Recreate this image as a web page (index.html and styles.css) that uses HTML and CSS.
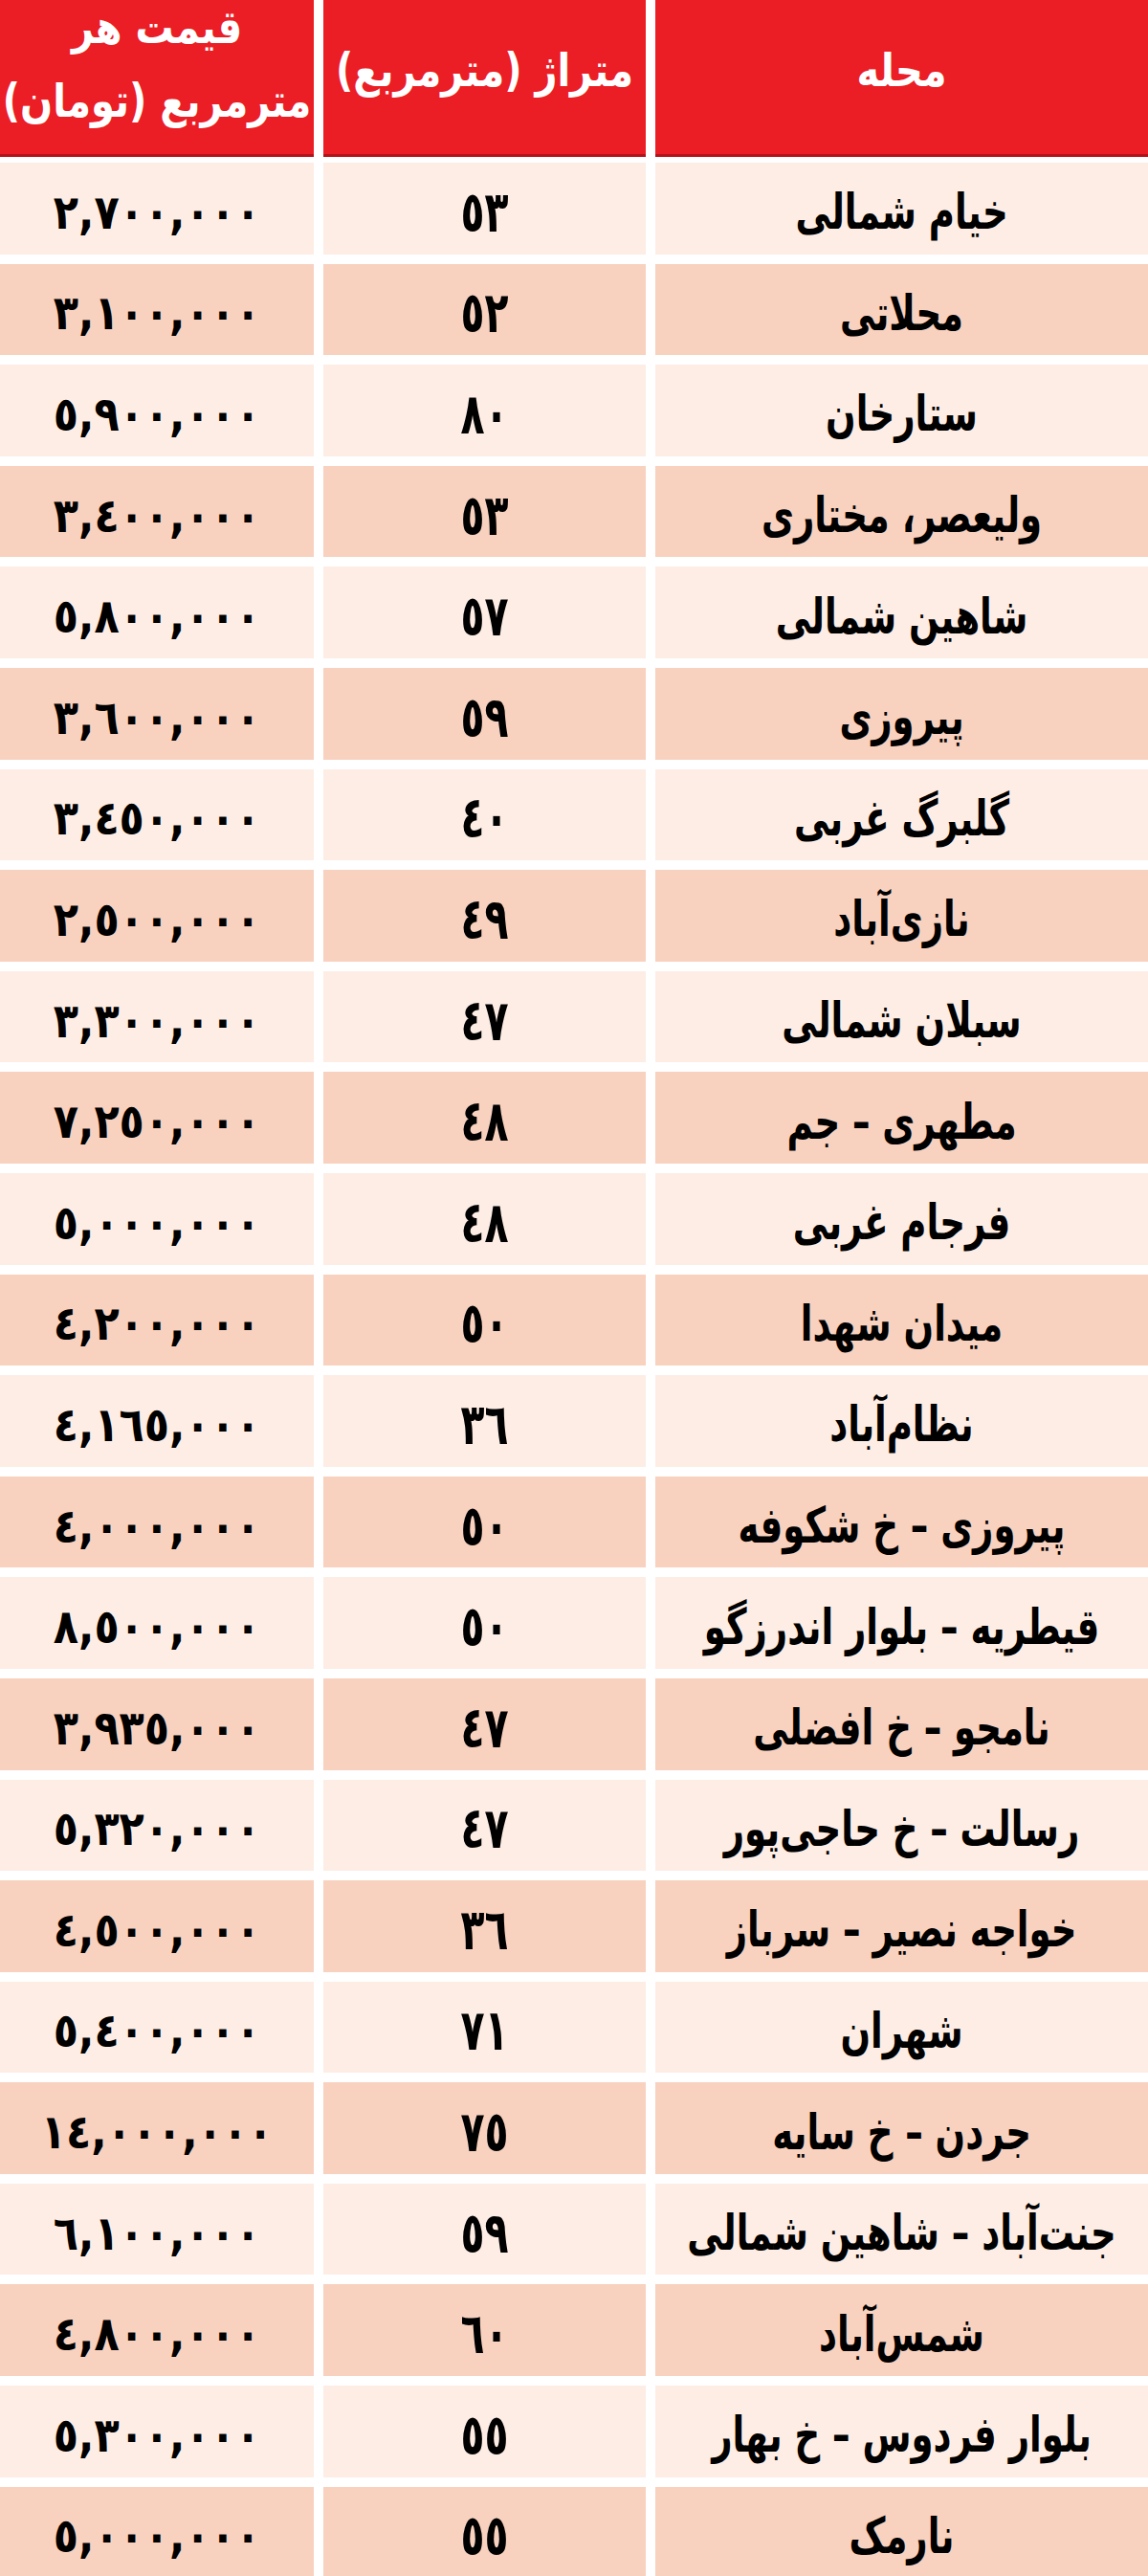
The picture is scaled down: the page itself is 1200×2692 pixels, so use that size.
FILE: index.html
```html
<!DOCTYPE html>
<html lang="fa" dir="rtl">
<head>
<meta charset="utf-8">
<title>قیمت مسکن</title>
<link rel="stylesheet" href="styles.css">
</head>
<body>
<div class="table">
  <div class="row head">
    <div class="cell"><span class="t">محله</span></div>
    <div class="cell"><span class="t">متراژ (مترمربع)</span></div>
    <div class="cell two"><span class="t">قیمت هر<br>مترمربع (تومان)</span></div>
  </div>
  <div class="rows">
    <div class="row light"><div class="cell name"><span class="t">خیام شمالی</span></div><div class="cell area"><span class="t">٥٣</span></div><div class="cell price"><span class="t">٢,٧٠٠,٠٠٠</span></div></div>
    <div class="row dark"><div class="cell name"><span class="t">محلاتی</span></div><div class="cell area"><span class="t">٥٢</span></div><div class="cell price"><span class="t">٣,١٠٠,٠٠٠</span></div></div>
    <div class="row light"><div class="cell name"><span class="t">ستارخان</span></div><div class="cell area"><span class="t">٨٠</span></div><div class="cell price"><span class="t">٥,٩٠٠,٠٠٠</span></div></div>
    <div class="row dark"><div class="cell name"><span class="t">ولیعصر، مختاری</span></div><div class="cell area"><span class="t">٥٣</span></div><div class="cell price"><span class="t">٣,٤٠٠,٠٠٠</span></div></div>
    <div class="row light"><div class="cell name"><span class="t">شاهین شمالی</span></div><div class="cell area"><span class="t">٥٧</span></div><div class="cell price"><span class="t">٥,٨٠٠,٠٠٠</span></div></div>
    <div class="row dark"><div class="cell name"><span class="t">پیروزی</span></div><div class="cell area"><span class="t">٥٩</span></div><div class="cell price"><span class="t">٣,٦٠٠,٠٠٠</span></div></div>
    <div class="row light"><div class="cell name"><span class="t">گلبرگ غربی</span></div><div class="cell area"><span class="t">٤٠</span></div><div class="cell price"><span class="t">٣,٤٥٠,٠٠٠</span></div></div>
    <div class="row dark"><div class="cell name"><span class="t">نازی‌آباد</span></div><div class="cell area"><span class="t">٤٩</span></div><div class="cell price"><span class="t">٢,٥٠٠,٠٠٠</span></div></div>
    <div class="row light"><div class="cell name"><span class="t">سبلان شمالی</span></div><div class="cell area"><span class="t">٤٧</span></div><div class="cell price"><span class="t">٣,٣٠٠,٠٠٠</span></div></div>
    <div class="row dark"><div class="cell name"><span class="t">مطهری – جم</span></div><div class="cell area"><span class="t">٤٨</span></div><div class="cell price"><span class="t">٧,٢٥٠,٠٠٠</span></div></div>
    <div class="row light"><div class="cell name"><span class="t">فرجام غربی</span></div><div class="cell area"><span class="t">٤٨</span></div><div class="cell price"><span class="t">٥,٠٠٠,٠٠٠</span></div></div>
    <div class="row dark"><div class="cell name"><span class="t">میدان شهدا</span></div><div class="cell area"><span class="t">٥٠</span></div><div class="cell price"><span class="t">٤,٢٠٠,٠٠٠</span></div></div>
    <div class="row light"><div class="cell name"><span class="t">نظام‌آباد</span></div><div class="cell area"><span class="t">٣٦</span></div><div class="cell price"><span class="t">٤,١٦٥,٠٠٠</span></div></div>
    <div class="row dark"><div class="cell name"><span class="t">پیروزی – خ شکوفه</span></div><div class="cell area"><span class="t">٥٠</span></div><div class="cell price"><span class="t">٤,٠٠٠,٠٠٠</span></div></div>
    <div class="row light"><div class="cell name"><span class="t">قیطریه – بلوار اندرزگو</span></div><div class="cell area"><span class="t">٥٠</span></div><div class="cell price"><span class="t">٨,٥٠٠,٠٠٠</span></div></div>
    <div class="row dark"><div class="cell name"><span class="t">نامجو – خ افضلی</span></div><div class="cell area"><span class="t">٤٧</span></div><div class="cell price"><span class="t">٣,٩٣٥,٠٠٠</span></div></div>
    <div class="row light"><div class="cell name"><span class="t">رسالت – خ حاجی‌پور</span></div><div class="cell area"><span class="t">٤٧</span></div><div class="cell price"><span class="t">٥,٣٢٠,٠٠٠</span></div></div>
    <div class="row dark"><div class="cell name"><span class="t">خواجه نصیر – سرباز</span></div><div class="cell area"><span class="t">٣٦</span></div><div class="cell price"><span class="t">٤,٥٠٠,٠٠٠</span></div></div>
    <div class="row light"><div class="cell name"><span class="t">شهران</span></div><div class="cell area"><span class="t">٧١</span></div><div class="cell price"><span class="t">٥,٤٠٠,٠٠٠</span></div></div>
    <div class="row dark"><div class="cell name"><span class="t">جردن – خ سایه</span></div><div class="cell area"><span class="t">٧٥</span></div><div class="cell price"><span class="t">١٤,٠٠٠,٠٠٠</span></div></div>
    <div class="row light"><div class="cell name"><span class="t">جنت‌آباد – شاهین شمالی</span></div><div class="cell area"><span class="t">٥٩</span></div><div class="cell price"><span class="t">٦,١٠٠,٠٠٠</span></div></div>
    <div class="row dark"><div class="cell name"><span class="t">شمس‌آباد</span></div><div class="cell area"><span class="t">٦٠</span></div><div class="cell price"><span class="t">٤,٨٠٠,٠٠٠</span></div></div>
    <div class="row light"><div class="cell name"><span class="t">بلوار فردوس – خ بهار</span></div><div class="cell area"><span class="t">٥٥</span></div><div class="cell price"><span class="t">٥,٣٠٠,٠٠٠</span></div></div>
    <div class="row dark"><div class="cell name"><span class="t">نارمک</span></div><div class="cell area"><span class="t">٥٥</span></div><div class="cell price"><span class="t">٥,٠٠٠,٠٠٠</span></div></div>
  </div>
</div>
</body>
</html>
```
FILE: styles.css
```css
html, body {
  margin: 0;
  padding: 0;
  background: #ffffff;
}
body {
  width: 1200px;
  font-family: "DejaVu Sans", "Noto Sans", sans-serif;
  font-weight: bold;
  color: #000000;
}
.table {
  display: flex;
  flex-direction: column;
}
.row {
  display: grid;
  grid-template-columns: 515px 337px 328px;
  column-gap: 10px;
}
.cell {
  display: flex;
  align-items: center;
  justify-content: center;
  text-align: center;
  overflow: hidden;
  box-sizing: border-box;
}
.t {
  display: inline-block;
  white-space: nowrap;
}
.head {
  height: 164px;
}
.head .cell {
  background: #eb1d25;
  color: #ffffff;
  font-size: 40px;
  box-shadow: inset 0 -3px 0 #b5131a;
  padding-bottom: 18px;
}
.head .t {
  transform: scaleY(1.2);
  line-height: 64px;
}
.head .two {
  padding-bottom: 30px;
}
.rows {
  display: flex;
  flex-direction: column;
  gap: 10px;
  padding-top: 6px;
}
.rows .row {
  height: 95.6px;
}
.rows .cell {
  padding-top: 8px;
}
.light .cell {
  background: #fdede5;
}
.dark .cell {
  background: #f8d1bf;
}
.name {
  font-size: 37px;
}
.name .t {
  transform: scaleY(1.4);
}
.area {
  direction: ltr;
  font-size: 41px;
}
.area .t {
  transform: scaleY(1.45);
}
.price {
  direction: ltr;
  font-size: 43px;
}
.price .t {
  transform: scaleY(1.15);
}
```
